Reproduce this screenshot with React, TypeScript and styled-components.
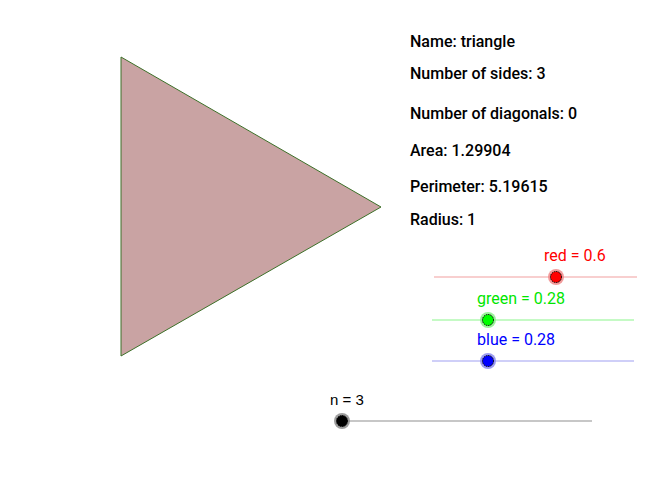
import React from "react";
import styled, { createGlobalStyle } from "styled-components";

const Global = createGlobalStyle`
  html, body { margin: 0; padding: 0; background: #ffffff; }
  body { font-family: Roboto, "Noto Sans", sans-serif; }
`;

const Canvas = styled.div`
  position: relative;
  width: 669px;
  height: 493px;
  overflow: hidden;
  background: #ffffff;
`;

const Drawing = styled.svg`
  position: absolute;
  left: 0;
  top: 0;
`;

const InfoText = styled.div<{ $x: number; $y: number }>`
  position: absolute;
  left: ${(p) => p.$x}px;
  top: ${(p) => p.$y}px;
  font-family: Roboto, "Noto Sans", sans-serif;
  font-weight: 500;
  font-size: 16px;
  line-height: 16px;
  color: #000000;
  white-space: nowrap;
`;

const SliderLabel = styled.div<{ $x: number; $y: number; $color: string; $font?: string; $size: number }>`
  position: absolute;
  left: ${(p) => p.$x}px;
  top: ${(p) => p.$y}px;
  font-family: ${(p) => p.$font || 'Roboto, "Noto Sans", sans-serif'};
  font-weight: 400;
  font-size: ${(p) => p.$size}px;
  line-height: ${(p) => p.$size}px;
  color: ${(p) => p.$color};
  white-space: nowrap;
`;

type Slider = {
  label: string;
  lx: number;
  ly: number;
  x1: number;
  x2: number;
  y: number;
  px: number;
  line: string;
  fill: string;
  halo: string;
  text: string;
  font?: string;
  size: number;
};

const sliders: Slider[] = [
  { label: "red = 0.6", lx: 544, ly: 248, x1: 434, x2: 637, y: 277, px: 556, line: "#f2a0a0", fill: "#ff0000", halo: "#f08a8a", text: "#ff0000", size: 16 },
  { label: "green = 0.28", lx: 477, ly: 291, x1: 432, x2: 634, y: 320, px: 488, line: "#8cf58c", fill: "#00ff00", halo: "#8af08a", text: "#00e600", size: 16 },
  { label: "blue = 0.28", lx: 477, ly: 332, x1: 432, x2: 634, y: 361, px: 488, line: "#a0a0f2", fill: "#0000ff", halo: "#8a8af0", text: "#0000ff", size: 16 },
  { label: "n = 3", lx: 330, ly: 392, x1: 342, x2: 592, y: 421, px: 342, line: "#909090", fill: "#000000", halo: "#8c8c8c", text: "#000000", font: '"Liberation Sans", Arial, sans-serif', size: 15 },
];

const info = [
  { t: "Name: triangle", y: 34 },
  { t: "Number of sides: 3", y: 66 },
  { t: "Number of diagonals: 0", y: 106 },
  { t: "Area: 1.29904", y: 143 },
  { t: "Perimeter: 5.19615", y: 179 },
  { t: "Radius: 1", y: 212 },
];

export default function App() {
  return (
    <>
      <Global />
      <Canvas>
        <Drawing width={669} height={493} viewBox="0 0 669 493">
          <polygon
            points="121,57 381,207 121,356"
            fill="#c9a3a3"
            stroke="#3c7028"
            strokeWidth={1}
          />
          {sliders.map((s) => (
            <g key={s.label}>
              <line x1={s.x1} y1={s.y} x2={s.x2} y2={s.y} stroke={s.line} strokeWidth={1.2} />
              <circle cx={s.px} cy={s.y} r={8} fill={s.halo} opacity={0.85} />
              <circle cx={s.px} cy={s.y} r={5.5} fill={s.fill} stroke="#000" strokeWidth={1} strokeDasharray="1.5 0.8" />
            </g>
          ))}
        </Drawing>
        {info.map((i) => (
          <InfoText key={i.t} $x={410} $y={i.y}>
            {i.t}
          </InfoText>
        ))}
        {sliders.map((s) => (
          <SliderLabel key={s.label} $x={s.lx} $y={s.ly} $color={s.text} $font={s.font} $size={s.size}>
            {s.label}
          </SliderLabel>
        ))}
      </Canvas>
    </>
  );
}
